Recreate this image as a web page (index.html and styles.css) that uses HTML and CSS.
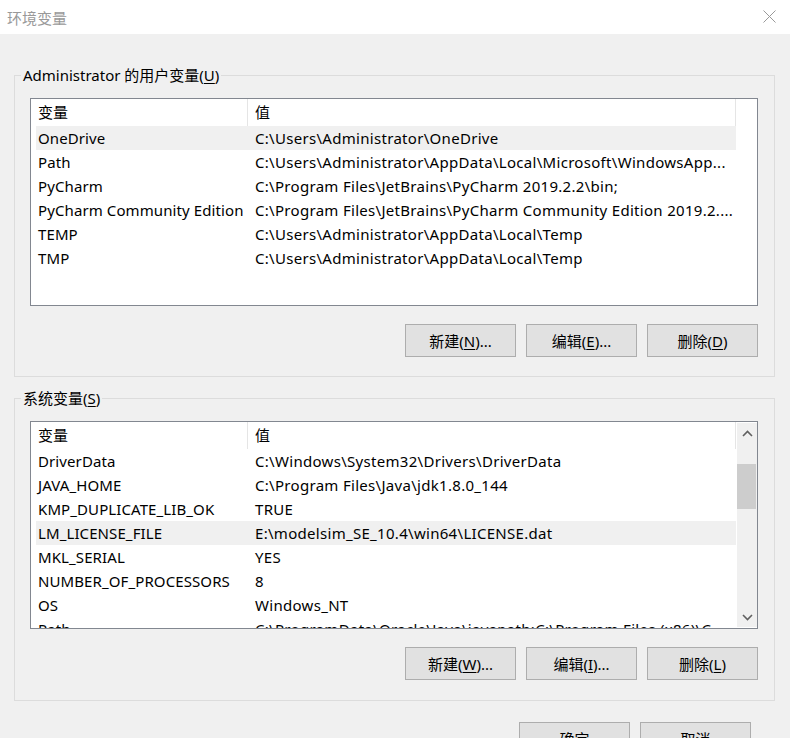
FILE: index.html
```html
<!DOCTYPE html>
<html lang="zh-CN">
<head>
    <meta charset="UTF-8">
    <title>环境变量</title>
    <link rel="stylesheet" href="styles.css">
</head>
<body>
    <div class="window">
        <div class="titlebar">
            <span class="title">环境变量</span>
            <button class="close-btn" aria-label="关闭" title="关闭">
                <svg width="13" height="13" viewBox="0 0 13 13" fill="none" stroke="currentColor" stroke-width="1">
                    <line x1="0.5" y1="0.5" x2="12.5" y2="12.5"></line>
                    <line x1="12.5" y1="0.5" x2="0.5" y2="12.5"></line>
                </svg>
            </button>
        </div>

        <div class="content">
            <!-- User variables -->
            <fieldset class="group">
                <legend>Administrator 的用户变量(<u>U</u>)</legend>
                <div class="list">
                    <div class="list-main">
                        <div class="list-header">
                            <div class="head-cell head-name">变量</div>
                            <div class="head-cell head-value">值</div>
                        </div>
                        <div class="rows">
                            <div class="row selected"><span class="cell-name">OneDrive</span><span class="cell-value">C:\Users\Administrator\OneDrive</span></div>
                            <div class="row"><span class="cell-name">Path</span><span class="cell-value">C:\Users\Administrator\AppData\Local\Microsoft\WindowsApp...</span></div>
                            <div class="row"><span class="cell-name">PyCharm</span><span class="cell-value">C:\Program Files\JetBrains\PyCharm 2019.2.2\bin;</span></div>
                            <div class="row"><span class="cell-name">PyCharm Community Edition</span><span class="cell-value">C:\Program Files\JetBrains\PyCharm Community Edition 2019.2....</span></div>
                            <div class="row"><span class="cell-name">TEMP</span><span class="cell-value">C:\Users\Administrator\AppData\Local\Temp</span></div>
                            <div class="row"><span class="cell-name">TMP</span><span class="cell-value">C:\Users\Administrator\AppData\Local\Temp</span></div>
                        </div>
                    </div>
                </div>
                <div class="buttons">
                    <button class="btn">新建(<u>N</u>)...</button>
                    <button class="btn">编辑(<u>E</u>)...</button>
                    <button class="btn">删除(<u>D</u>)</button>
                </div>
            </fieldset>

            <!-- System variables -->
            <fieldset class="group group-system">
                <legend>系统变量(<u>S</u>)</legend>
                <div class="list">
                    <div class="list-main">
                        <div class="list-header">
                            <div class="head-cell head-name">变量</div>
                            <div class="head-cell head-value">值</div>
                        </div>
                        <div class="rows">
                            <div class="row"><span class="cell-name">DriverData</span><span class="cell-value">C:\Windows\System32\Drivers\DriverData</span></div>
                            <div class="row"><span class="cell-name">JAVA_HOME</span><span class="cell-value">C:\Program Files\Java\jdk1.8.0_144</span></div>
                            <div class="row"><span class="cell-name">KMP_DUPLICATE_LIB_OK</span><span class="cell-value">TRUE</span></div>
                            <div class="row selected"><span class="cell-name">LM_LICENSE_FILE</span><span class="cell-value">E:\modelsim_SE_10.4\win64\LICENSE.dat</span></div>
                            <div class="row"><span class="cell-name">MKL_SERIAL</span><span class="cell-value">YES</span></div>
                            <div class="row"><span class="cell-name">NUMBER_OF_PROCESSORS</span><span class="cell-value">8</span></div>
                            <div class="row"><span class="cell-name">OS</span><span class="cell-value">Windows_NT</span></div>
                            <div class="row"><span class="cell-name">Path</span><span class="cell-value">C:\ProgramData\Oracle\Java\javapath;C:\Program Files (x86)\C...</span></div>
                        </div>
                    </div>
                    <div class="scrollbar">
                        <div class="scroll-arrow">
                            <svg width="11" height="7" viewBox="0 0 11 7" fill="none" stroke="#606060" stroke-width="1.6">
                                <polyline points="1,6 5.5,1.5 10,6"></polyline>
                            </svg>
                        </div>
                        <div class="scroll-track">
                            <div class="scroll-thumb"></div>
                        </div>
                        <div class="scroll-arrow">
                            <svg width="11" height="7" viewBox="0 0 11 7" fill="none" stroke="#606060" stroke-width="1.6">
                                <polyline points="1,1 5.5,5.5 10,1"></polyline>
                            </svg>
                        </div>
                    </div>
                </div>
                <div class="buttons">
                    <button class="btn">新建(<u>W</u>)...</button>
                    <button class="btn">编辑(<u>I</u>)...</button>
                    <button class="btn">删除(<u>L</u>)</button>
                </div>
            </fieldset>

            <div class="dialog-buttons">
                <button class="btn">确定</button>
                <button class="btn">取消</button>
            </div>
        </div>
    </div>
</body>
</html>
```

FILE: styles.css
```css
* {
    margin: 0;
    padding: 0;
    box-sizing: border-box;
}

body {
    font-family: "Noto Sans", "Noto Sans CJK SC", sans-serif;
    font-size: 15px;
    color: #000;
    background: #f0f0f0;
    width: 790px;
    height: 738px;
    overflow: hidden;
}

/* Title bar */
.titlebar {
    height: 34px;
    background: #fff;
    display: flex;
    align-items: center;
    justify-content: space-between;
    padding: 0 14px 0 7px;
}

.title {
    color: #999;
    font-size: 15px;
}

.close-btn {
    border: none;
    background: none;
    color: #999;
    display: flex;
    margin-top: -2px;
}

/* Content */
.content {
    padding: 31px 15px 0 14px;
}

.group {
    border: 1px solid #dcdcdc;
    padding: 13px 16px 19px 15px;
}

.group-system {
    margin-top: 11px;
    padding-bottom: 20px;
}

.group legend {
    line-height: 20px;
    padding: 0 2px;
    margin-left: -9px;
}

u {
    text-decoration-thickness: 1px;
    text-underline-offset: 2px;
}

/* List view */
.list {
    height: 208px;
    background: #fff;
    border: 1px solid #828790;
    display: flex;
    overflow: hidden;
}

.list-main {
    width: 706px;
    overflow: hidden;
}

.list-header {
    display: flex;
    height: 27px;
    width: 705px;
}

.head-cell {
    padding: 2px 0 0 7px;
    line-height: 23px;
    border-right: 1px solid #e5e5e5;
}

.head-name {
    width: 217px;
}

.head-value {
    flex: 1;
}

.rows {
    margin-left: 5px;
    width: 700px;
}

.row {
    display: flex;
    height: 24px;
    line-height: 24px;
    white-space: nowrap;
}

.row.selected {
    background: #f0f0f0;
}

.cell-name {
    width: 217px;
    padding-left: 2px;
    letter-spacing: 0.1px;
    overflow: hidden;
}

.cell-value {
    flex: 1;
    padding-left: 2px;
    letter-spacing: 0.3px;
    overflow: hidden;
}

/* Scrollbar */
.scrollbar {
    width: 20px;
    margin: 1px 0 1px 0;
    background: #f0f0f0;
    display: flex;
    flex-direction: column;
}

.scroll-arrow {
    height: 20px;
    display: flex;
    align-items: center;
    justify-content: center;
}

.scroll-track {
    flex: 1;
    padding-top: 21px;
}

.scroll-thumb {
    height: 45px;
    background: #cdcdcd;
    margin-right: 1px;
}

/* Buttons */
.buttons {
    display: flex;
    justify-content: flex-end;
    gap: 10px;
    margin-top: 18px;
}

.btn {
    width: 111px;
    height: 33px;
    background: #e1e1e1;
    border: 1px solid #adadad;
    font-family: inherit;
    font-size: 15px;
    color: #000;
}

.dialog-buttons {
    display: flex;
    justify-content: flex-end;
    gap: 10px;
    margin-top: 21px;
    padding-right: 24px;
}
```
